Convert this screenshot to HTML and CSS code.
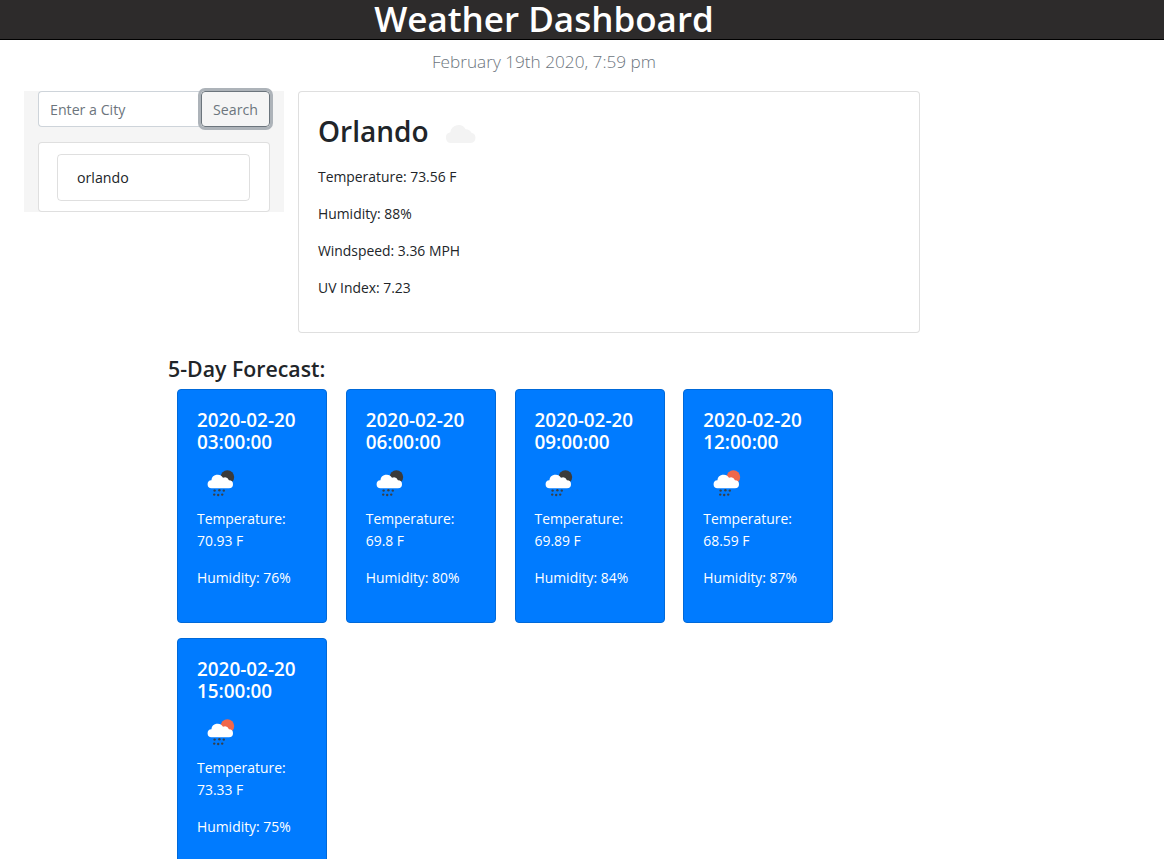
FILE: index.html
```html
<!DOCTYPE html>
<html lang="en">
<head>
<meta charset="utf-8">
<title>Weather Dashboard</title>
<link rel="stylesheet" href="styles.css">
</head>
<body>
<svg class="defs" width="0" height="0" aria-hidden="true">
  <defs>
    <path id="cloud" d="M9 30a6 6 0 0 1-.8-11.9A9 9 0 0 1 25 14.6a7 7 0 0 1 6.6 4A5.8 5.8 0 0 1 31 30z"/>
    <path id="rain-cloud" d="M8.5 26.5a5 5 0 0 1-.5-10A7.8 7.8 0 0 1 22.5 13.5a6 6 0 0 1 7.5 3A5 5 0 0 1 30 26.5z"/>
    <g id="drops" fill="#36404a">
      <circle cx="12" cy="29.5" r="1.5"/><circle cx="18" cy="29" r="1.5"/><circle cx="23.5" cy="29.5" r="1.5"/>
      <circle cx="11.5" cy="34.5" r="1.5"/><circle cx="16.5" cy="35" r="1.5"/><circle cx="21.5" cy="34.5" r="1.5"/>
    </g>
    <symbol id="rain-night" viewBox="0 0 40 40"><circle cx="28" cy="12.5" r="8.5" fill="#3b3b3b"/><use href="#rain-cloud" fill="#fff"/><use href="#drops"/></symbol>
    <symbol id="rain-day" viewBox="0 0 40 40"><circle cx="28" cy="12.5" r="8.5" fill="#f0674b"/><use href="#rain-cloud" fill="#fff"/><use href="#drops"/></symbol>
    <symbol id="plain-cloud" viewBox="0 0 40 40"><use href="#cloud" fill="#f3f3f3"/></symbol>
  </defs>
</svg>
<header class="site-header"><h1 class="site-title">Weather Dashboard</h1></header>
<p class="date">February 19th 2020, 7:59 pm</p>
<main class="top-row">
  <aside class="sidebar">
    <form class="search">
      <input class="search-input" type="text" placeholder="Enter a City">
      <button class="search-button" type="button">Search</button>
    </form>
    <div class="history"><div class="history-item">orlando</div></div>
  </aside>
  <section class="current">
    <h2 class="city">Orlando <svg class="city-icon"><use href="#plain-cloud"/></svg></h2>
    <p class="stat">Temperature: 73.56 F</p>
    <p class="stat">Humidity: 88%</p>
    <p class="stat">Windspeed: 3.36 MPH</p>
    <p class="stat">UV Index: 7.23</p>
  </section>
</main>
<section class="forecast">
  <h3 class="forecast-title">5-Day Forecast:</h3>
  <div class="forecast-grid">
    <article class="day">
      <h4 class="day-date">2020-02-20 03:00:00</h4>
      <svg class="day-icon"><use href="#rain-night"/></svg>
      <p class="stat">Temperature: 70.93 F</p>
      <p class="stat">Humidity: 76%</p>
    </article>
    <article class="day">
      <h4 class="day-date">2020-02-20 06:00:00</h4>
      <svg class="day-icon"><use href="#rain-night"/></svg>
      <p class="stat">Temperature: 69.8 F</p>
      <p class="stat">Humidity: 80%</p>
    </article>
    <article class="day">
      <h4 class="day-date">2020-02-20 09:00:00</h4>
      <svg class="day-icon"><use href="#rain-night"/></svg>
      <p class="stat">Temperature: 69.89 F</p>
      <p class="stat">Humidity: 84%</p>
    </article>
    <article class="day">
      <h4 class="day-date">2020-02-20 12:00:00</h4>
      <svg class="day-icon"><use href="#rain-day"/></svg>
      <p class="stat">Temperature: 68.59 F</p>
      <p class="stat">Humidity: 87%</p>
    </article>
    <article class="day">
      <h4 class="day-date">2020-02-20 15:00:00</h4>
      <svg class="day-icon"><use href="#rain-day"/></svg>
      <p class="stat">Temperature: 73.33 F</p>
      <p class="stat">Humidity: 75%</p>
    </article>
  </div>
</section>
</body>
</html>
```
FILE: styles.css
```css
* { box-sizing: border-box; }
html, body { height: 859px; overflow: hidden; }
body {
  margin: 0;
  font-family: "Open Sans", "Noto Sans", sans-serif;
  font-size: 13.9px;
  line-height: 21.5px;
  color: #212529;
  background: #fff;
}
.defs { position: absolute; }
.site-header {
  height: 40px;
  background: #2d2b2b;
  border-bottom: 1px solid #000;
  width: 100%;
}
.site-title {
  margin: 0;
  width: 1088px;
  text-align: center;
  color: #fff;
  font-size: 35px;
  font-weight: 600;
  line-height: 38px;
}
.date {
  width: 1088px;
  margin: 10px 0 17px;
  height: 24px;
  line-height: 24px;
  text-align: center;
  font-size: 17.2px;
  font-weight: 300;
  color: #6c757d;
}
.top-row {
  display: flex;
  align-items: flex-start;
  gap: 14px;
  padding-left: 24px;
}
.sidebar {
  width: 260px;
  height: 121px;
  padding: 0 14px;
  background: #f5f5f5;
}
.search { display: flex; height: 36px; font-size: 14.2px; }
.search-input {
  width: 163px;
  height: 36px;
  padding: 0 11px;
  border: 1px solid #ced4da;
  border-right: 0;
  border-radius: 4px 0 0 4px;
  font: inherit;
  color: #495057;
  background: #fff;
}
.search-input::placeholder { color: #6c757d; opacity: 1; }
.search-button {
  width: 69px;
  height: 36px;
  padding: 1px 0 0;
  border: 1px solid #6c757d;
  border-radius: 4px;
  outline: 3px solid #adb3b9;
  font: inherit;
  color: #6c757d;
  background: #f5f5f5;
}
.history {
  margin-top: 15px;
  height: 70px;
  padding: 11px 19px 0 18px;
  background: #fff;
  border: 1px solid rgba(0,0,0,.125);
  border-radius: 4px;
  font-size: 14.2px;
}
.history-item {
  height: 47px;
  line-height: 45px;
  padding-left: 19px;
  border: 1px solid rgba(0,0,0,.125);
  border-radius: 4px;
}
.current {
  width: 622px;
  height: 242px;
  padding: 19px 19px 0;
  background: #fff;
  border: 1px solid rgba(0,0,0,.125);
  border-radius: 4px;
}
.city {
  display: flex;
  align-items: center;
  gap: 14px;
  margin: 0 0 15px;
  height: 40px;
  font-size: 28px;
  font-weight: 600;
  line-height: 40px;
}
.city-icon { width: 36px; height: 36px; margin: 5px 0 0 1px; }
.stat { margin: 0 0 15.5px; }
.forecast { margin: 23px 0 0 168px; width: 680px; }
.forecast-title {
  margin: 0 0 7px;
  height: 26px;
  font-size: 21.3px;
  font-weight: 600;
  line-height: 26px;
}
.forecast-grid {
  display: flex;
  flex-wrap: wrap;
  gap: 15px 18.75px;
  padding-left: 9px;
}
.day {
  width: 150px;
  height: 234px;
  padding: 19px;
  background: #007bff;
  color: #fff;
  border: 1px solid #0069d9;
  border-radius: 4px;
}
.day-date {
  margin: 0 0 14px;
  font-size: 18.9px;
  font-weight: 600;
  line-height: 22px;
}
.day-icon { display: block; width: 32px; height: 32px; margin: 0 0 9px 8px; }
```
